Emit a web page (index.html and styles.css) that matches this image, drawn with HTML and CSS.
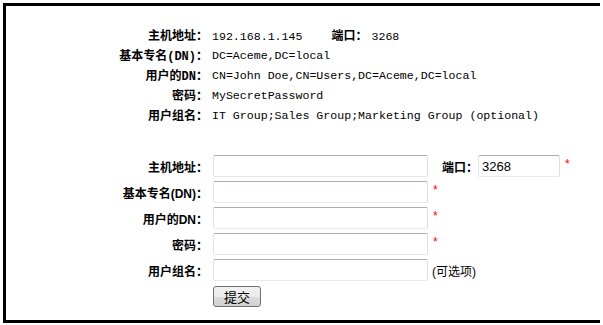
FILE: index.html
```html
<!DOCTYPE html>
<html lang="zh-CN">
<head>
    <meta charset="UTF-8">
    <title>LDAP 设置</title>
    <link rel="stylesheet" href="styles.css">
</head>
<body>

    <div class="frame">
        <div class="info">
            <div class="info-label">主机地址：</div>
            <div class="info-value">192.168.1.145<span class="port-label">端口：</span>3268</div>

            <div class="info-label">基本专名(DN)：</div>
            <div class="info-value">DC=Aceme,DC=local</div>

            <div class="info-label">用户的DN：</div>
            <div class="info-value">CN=John Doe,CN=Users,DC=Aceme,DC=local</div>

            <div class="info-label">密码：</div>
            <div class="info-value">MySecretPassword</div>

            <div class="info-label">用户组名：</div>
            <div class="info-value">IT Group;Sales Group;Marketing Group (optional)</div>
        </div>

        <form class="form" onsubmit="return false;">
            <label class="form-label" for="host">主机地址：</label>
            <div class="form-field">
                <input type="text" id="host" class="text-input">
                <label class="form-label port" for="port">端口：</label>
                <input type="text" id="port" class="text-input small" value="3268">
                <span class="required">*</span>
            </div>

            <label class="form-label" for="baseDn">基本专名(DN)：</label>
            <div class="form-field">
                <input type="text" id="baseDn" class="text-input">
                <span class="required">*</span>
            </div>

            <label class="form-label" for="userDn">用户的DN：</label>
            <div class="form-field">
                <input type="text" id="userDn" class="text-input">
                <span class="required">*</span>
            </div>

            <label class="form-label" for="password">密码：</label>
            <div class="form-field">
                <input type="password" id="password" class="text-input">
                <span class="required">*</span>
            </div>

            <label class="form-label" for="group">用户组名：</label>
            <div class="form-field">
                <input type="text" id="group" class="text-input">
                <span class="hint">(可选项)</span>
            </div>

            <div></div>
            <div class="form-field">
                <button type="submit" class="submit-btn">提交</button>
            </div>
        </form>
    </div>

</body>
</html>
```

FILE: styles.css
```css
body {
    margin: 3px;
    font-family: "Liberation Sans", "Noto Sans CJK SC", sans-serif;
    font-size: 12px;
    color: #000;
    background: #fff;
}
.frame {
    width: 594px;
    height: 314px;
    border: 3px solid #000;
}
.info {
    display: grid;
    grid-template-columns: 202px auto;
    grid-auto-rows: 20px;
    column-gap: 4px;
    align-items: center;
    padding-top: 19px;
}
.info-label {
    text-align: right;
    font-weight: bold;
    font-family: "Liberation Mono", "Noto Sans CJK SC", monospace;
    font-size: 12px;
}
.info-value {
    font-family: "Liberation Mono", "Noto Sans CJK SC", monospace;
    font-size: 11.6px;
    white-space: pre;
}
.port-label {
    font-weight: bold;
    font-size: 12px;
    margin-left: 29px;
    margin-right: 4px;
}
.form {
    display: grid;
    grid-template-columns: 202px auto;
    grid-auto-rows: 22px;
    column-gap: 5px;
    row-gap: 4px;
    align-items: center;
    margin-top: 30px;
}
.form-label {
    text-align: right;
    font-weight: bold;
}
.form-label.port {
    margin-left: 14px;
    margin-right: 0;
}
.form-field {
    display: flex;
    align-items: center;
    height: 22px;
}
.text-input {
    width: 215px;
    height: 22px;
    box-sizing: border-box;
    margin: 0;
    padding: 0 3px;
    border: 1px solid;
    border-color: #abadb3 #dbdfe6 #e3e9ef #e2e3ea;
    border-radius: 2px;
    font-family: "Liberation Sans", sans-serif;
    font-size: 13px;
    color: #000;
}
.text-input.small {
    width: 82px;
}
.required {
    color: #ff0000;
    font-size: 12px;
    margin-left: 5px;
    margin-top: -4px;
}
.hint {
    margin-left: 4px;
    font-size: 12px;
}
.submit-btn {
    width: 48px;
    height: 21px;
    padding: 0;
    border: 1px solid #707070;
    border-radius: 3px;
    background: linear-gradient(#f2f2f2, #ebebeb 50%, #dddddd 50%, #cfcfcf);
    font-family: "Noto Sans CJK SC", sans-serif;
    font-size: 13px;
    color: #000;
}
```
